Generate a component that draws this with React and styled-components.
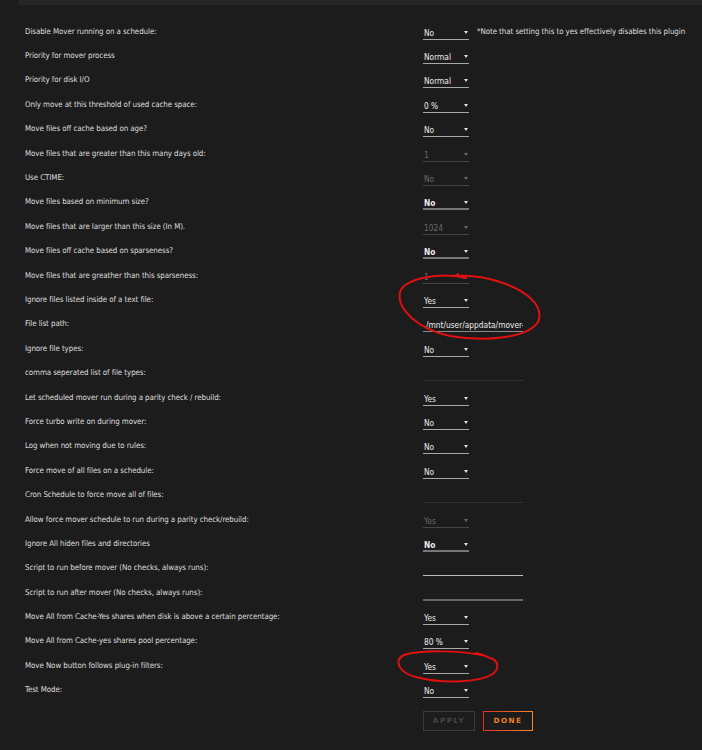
import React from 'react';
import styled, { createGlobalStyle } from 'styled-components';

const GlobalStyle = createGlobalStyle`
  html, body {
    margin: 0;
    padding: 0;
    background: #1c1c1c;
  }
  body {
    font-family: "Liberation Sans Narrow", "DejaVu Sans Condensed", "Liberation Sans", sans-serif;
  }
`;

const Page = styled.div`
  position: relative;
  width: 702px;
  height: 750px;
  background: #1c1c1c;
  overflow: hidden;
`;

const TopStrip = styled.div`
  height: 5px;
  margin-left: 18px;
  background: #262626;
`;

const Form = styled.div`
  display: flex;
  flex-direction: column;
  padding: 14px 0 0 25px;
`;

const Row = styled.div`
  display: grid;
  grid-template-columns: 398px auto;
  align-items: center;
  height: 24.4px;
`;

const Label = styled.div`
  font-size: 7.9px;
  letter-spacing: -0.08px;
  color: #dedede;
  white-space: nowrap;
`;

const Control = styled.div`
  display: flex;
  align-items: center;
  gap: 8px;
`;

const Select = styled.div`
  position: relative;
  width: 46px;
  height: 15px;
  box-sizing: border-box;
  padding: 3px 0 0 1px;
  font-size: 8.3px;
  font-weight: ${(p) => (p.$strong ? 700 : 400)};
  color: ${(p) => (p.$disabled ? '#6a6a6a' : '#ececec')};
  border-bottom: ${(p) => (p.$strong ? '2px solid #777' : p.$disabled ? '1px solid #454545' : '1px solid #a8a8a8')};
  margin-top: 2px;

  &::after {
    content: '';
    position: absolute;
    right: 1px;
    top: 6px;
    border-left: 2.5px solid transparent;
    border-right: 2.5px solid transparent;
    border-top: 3px solid ${(p) => (p.$disabled ? '#6a6a6a' : '#e0e0e0')};
  }
`;

const TextInput = styled.div`
  width: 100px;
  height: 15px;
  box-sizing: border-box;
  padding: 3px 0 0 3px;
  margin-top: 2px;
  font-size: 8.3px;
  color: #ececec;
  white-space: nowrap;
  overflow: hidden;
  border-bottom: ${(p) => p.$line};
`;

const Note = styled.span`
  font-size: 7.9px;
  letter-spacing: -0.08px;
  color: #dedede;
  white-space: nowrap;
`;

const Buttons = styled.div`
  display: flex;
  gap: 8px;
  padding: 9px 0 0 423px;
`;

const Button = styled.div`
  width: ${(p) => p.$w}px;
  height: 20px;
  box-sizing: border-box;
  display: flex;
  align-items: center;
  justify-content: center;
  font-family: "DejaVu Sans", sans-serif;
  font-size: 7.2px;
  font-weight: 700;
  letter-spacing: 1.5px;
  color: ${(p) => p.$color};
  border: 1px solid ${(p) => p.$border};
  border-image: ${(p) => p.$gradient || 'none'};
`;

const Annotations = styled.svg`
  position: absolute;
  left: 0;
  top: 0;
  pointer-events: none;
`;

const rows = [
  { label: 'Disable Mover running on a schedule:', sel: 'No', note: '*Note that setting this to yes effectively disables this plugin' },
  { label: 'Priority for mover process', sel: 'Normal' },
  { label: 'Priority for disk I/O', sel: 'Normal' },
  { label: 'Only move at this threshold of used cache space:', sel: '0 %' },
  { label: 'Move files off cache based on age?', sel: 'No' },
  { label: 'Move files that are greater than this many days old:', sel: '1', disabled: true },
  { label: 'Use CTIME:', sel: 'No', disabled: true },
  { label: 'Move files based on minimum size?', sel: 'No', strong: true },
  { label: 'Move files that are larger than this size (In M).', sel: '1024', disabled: true },
  { label: 'Move files off cache based on sparseness?', sel: 'No', strong: true },
  { label: 'Move files that are greather than this sparseness:', sel: '1', disabled: true },
  { label: 'Ignore files listed inside of a text file:', sel: 'Yes' },
  { label: 'File list path:', text: '/mnt/user/appdata/mover-', line: '1px solid #8a8a8a' },
  { label: 'Ignore file types:', sel: 'No' },
  { label: 'comma seperated list of file types:', text: '', line: '1px solid #333' },
  { label: 'Let scheduled mover run during a parity check / rebuild:', sel: 'Yes' },
  { label: 'Force turbo write on during mover:', sel: 'No' },
  { label: 'Log when not moving due to rules:', sel: 'No' },
  { label: 'Force move of all files on a schedule:', sel: 'No' },
  { label: 'Cron Schedule to force move all of files:', text: '', line: '1px solid #333' },
  { label: 'Allow force mover schedule to run during a parity check/rebuild:', sel: 'Yes', disabled: true },
  { label: 'Ignore All hiden files and directories', sel: 'No', strong: true },
  { label: 'Script to run before mover (No checks, always runs):', text: '', line: '1px solid #bdbdbd' },
  { label: 'Script to run after mover (No checks, always runs):', text: '', line: '2px solid #666' },
  { label: 'Move All from Cache-Yes shares when disk is above a certain percentage:', sel: 'Yes' },
  { label: 'Move All from Cache-yes shares pool percentage:', sel: '80 %' },
  { label: 'Move Now button follows plug-in filters:', sel: 'Yes' },
  { label: 'Test Mode:', sel: 'No' },
];

const App = () => {
  return (
    <Page>
      <GlobalStyle />
      <TopStrip />
      <Form>
        {rows.map((r) => (
          <Row key={r.label}>
            <Label>{r.label}</Label>
            <Control>
              {r.sel !== undefined ? (
                <Select $disabled={r.disabled} $strong={r.strong}>{r.sel}</Select>
              ) : (
                <TextInput $line={r.line}>{r.text}</TextInput>
              )}
              {r.note && <Note>{r.note}</Note>}
            </Control>
          </Row>
        ))}
      </Form>
      <Buttons>
        <Button $w={52} $color="#474747" $border="#3a3a3a">APPLY</Button>
        <Button $w={50} $color="#f0801f" $border="#e33" $gradient="linear-gradient(90deg, #e22d2d, #f5882a) 1">DONE</Button>
      </Buttons>
      <Annotations width="702" height="750" viewBox="0 0 702 750">
        <path
          d="M466 278 C440 272 405 278 400 292 C396 310 420 330 450 336 C485 342 528 338 538 322 C545 305 525 290 500 282 C485 277 470 275 455 276 L458 274"
          fill="none"
          stroke="#e01010"
          strokeWidth="2"
          strokeLinecap="round"
        />
        <path
          d="M486 656 C460 650 420 650 404 655 C393 660 398 674 420 678 C445 684 480 682 493 674 C500 668 498 660 490 658 C484 656 482 654 476 653"
          fill="none"
          stroke="#e01010"
          strokeWidth="2"
          strokeLinecap="round"
        />
      </Annotations>
    </Page>
  );
};

export default App;
